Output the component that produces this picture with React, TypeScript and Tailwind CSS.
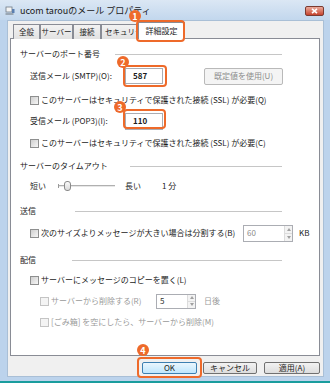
import React from 'react';

function Check({ disabled }: { disabled?: boolean }) {
  return (
    <span
      className={
        disabled
          ? 'inline-block w-[9px] h-[9px] shrink-0 border border-[#c4c4c4] bg-[#f4f4f4]'
          : 'inline-block w-[9px] h-[9px] shrink-0 border border-[#8e8f8f] bg-gradient-to-br from-[#cfcfcf] to-[#f7f7f7]'
      }
    />
  );
}

function Header({ title, line }: { title: string; line: string }) {
  return (
    <div className="flex h-[20px] items-center pl-[9px] pr-[37px]">
      <span>{title}</span>
      <div className={`ml-auto border-t border-[#c6c6c6] ${line}`} />
    </div>
  );
}

function Spin({ value, box, dim }: { value: string; box: string; dim?: boolean }) {
  return (
    <div className={`flex border border-[#abadb3] bg-white ${box}`}>
      <span className={`flex-1 pl-[3px] flex items-center ${dim ? 'text-[#8a8a8a]' : 'text-[#333]'}`}>{value}</span>
      <div className="flex w-[8px] flex-col border-l border-[#dcdcdc]">
        <div className="flex flex-1 items-center justify-center border-b border-[#dcdcdc] bg-[#f3f3f3]">
          <svg width="4" height="3" viewBox="0 0 4 3"><path d="M0 3 L2 0 L4 3 Z" fill="#a0a0a0" /></svg>
        </div>
        <div className="flex flex-1 items-center justify-center bg-[#f3f3f3]">
          <svg width="4" height="3" viewBox="0 0 4 3"><path d="M0 0 L2 3 L4 0 Z" fill="#a0a0a0" /></svg>
        </div>
      </div>
    </div>
  );
}

function Tab({ label, w }: { label: string; w: string }) {
  return (
    <div className={`flex h-[15px] items-center justify-center overflow-hidden whitespace-nowrap border border-b-0 border-[#898c95] bg-gradient-to-b from-[#f2f2f2] to-[#e2e2e2] text-[7.5px] ${w}`}>
      {label}
    </div>
  );
}

export default function App() {
  return (
    <div className="relative flex h-[383px] w-[330px] flex-col overflow-hidden border-b-2 border-[#1a9d9e] bg-[#bcd3ec] text-[8px] leading-none text-[#1b1b1b] font-['Noto_Sans_CJK_JP','Noto_Sans',sans-serif]">
      {/* title bar */}
      <div className="flex h-[20px] shrink-0 items-center bg-gradient-to-b from-[#dbe7f4] to-[#c2d7ed] pl-[5px] pr-[6px]">
        <svg width="10" height="10" viewBox="0 0 10 10" className="mt-[2px]">
          <rect x="1" y="1" width="6" height="5" fill="#f4f4f4" stroke="#6f7a86" strokeWidth="0.8" />
          <rect x="0.5" y="7" width="8" height="2" fill="#9aa7b4" />
          <rect x="7" y="3" width="2.5" height="4" fill="#5b7fb0" />
        </svg>
        <span className="ml-[5px] mt-[1px] text-[9px] text-[#1a1a1a]">ucom tarouのメール プロパティ</span>
        <div className="ml-auto mt-[1px] flex h-[10px] w-[19px] items-center justify-center rounded-[2px] border border-[#7a3a30] bg-gradient-to-b from-[#e9a99b] to-[#c5412c]">
          <svg width="7" height="6" viewBox="0 0 7 6">
            <path d="M1 0.8 L6 5.2 M6 0.8 L1 5.2" stroke="#ffffff" strokeWidth="1.6" />
          </svg>
        </div>
      </div>

      {/* dialog body */}
      <div className="ml-[7px] flex h-[357px] w-[317px] flex-col border border-[#a9bfd6] bg-[#f0f0f0] pl-[2px]">
        {/* tabs */}
        <div className="relative z-10 mt-[1px] flex h-[17px] items-end pl-[3px] -mb-[1px]">
          <Tab label="全般" w="w-[27px]" />
          <Tab label="サーバー" w="w-[33px]" />
          <Tab label="接続" w="w-[28px]" />
          <div className="flex h-[15px] w-[38px] items-center overflow-hidden whitespace-nowrap border border-b-0 border-[#898c95] bg-gradient-to-b from-[#f2f2f2] to-[#e2e2e2] pl-[3px] text-[7.5px]">
            セキュリティ
          </div>
          <div className="-ml-[1px] flex h-[17px] w-[47px] items-center justify-center border border-b-0 border-[#898c95] bg-white">
            詳細設定
          </div>
        </div>

        {/* panel */}
        <div className="flex h-[318px] w-[310px] flex-col border border-[#898c95] bg-white">
          <div className="mt-[5px]">
            <Header title="サーバーのポート番号" line="w-[167px]" />
          </div>
          <div className="mt-[2px] flex h-[20px] items-center pl-[19px]">
            <span className="w-[95px]">送信メール (SMTP)(O):</span>
            <div className="flex h-[16px] w-[38px] items-center border border-[#abadb3] bg-white pl-[7px] font-semibold">587</div>
            <div className="ml-[41px] flex h-[17px] w-[79px] items-center justify-center rounded-[2px] border border-[#b9b9b9] bg-[#f4f4f4] text-[#8c8c8c]">
              既定値を使用(U)
            </div>
          </div>
          <div className="mt-[4px] flex h-[20px] items-center pl-[19px]">
            <Check />
            <span className="ml-[2px]">このサーバーはセキュリティで保護された接続 (SSL) が必要(Q)</span>
          </div>
          <div className="mt-[1px] flex h-[20px] items-center pl-[19px]">
            <span className="w-[95px]">受信メール (POP3)(I):</span>
            <div className="flex h-[17px] w-[38px] items-center border border-[#abadb3] bg-white pl-[7px] font-semibold">110</div>
          </div>
          <div className="mt-[2px] flex h-[20px] items-center pl-[19px]">
            <Check />
            <span className="ml-[2px]">このサーバーはセキュリティで保護された接続 (SSL) が必要(C)</span>
          </div>

          <div className="mt-[3px]">
            <Header title="サーバーのタイムアウト" line="w-[152px]" />
          </div>
          <div className="flex h-[20px] items-center pl-[19px]">
            <span className="w-[28px]">短い</span>
            <div className="relative h-[12px] w-[57px]">
              <div className="absolute left-0 right-0 top-[5px] h-[2px] border-t border-[#b0b0b0] bg-[#e7e7e7]" />
              <div className="absolute left-0 top-[4px] h-[4px] w-[1px] bg-[#9a9a9a]" />
              <div className="absolute left-[6px] top-[1px] h-[10px] w-[7px] rounded-[3px] border border-[#8a8a8a] bg-gradient-to-b from-[#fbfbfb] to-[#dadada]" />
            </div>
            <span className="ml-[10px] w-[37px]">長い</span>
            <span>1 分</span>
          </div>

          <div className="mt-[5px]">
            <Header title="送信" line="w-[207px]" />
          </div>
          <div className="mt-[2px] flex h-[20px] items-center pl-[19px]">
            <Check />
            <span className="ml-[2px] w-[202px]">次のサイズよりメッセージが大きい場合は分割する(B)</span>
            <Spin value="60" box="h-[17px] w-[50px]" dim />
            <span className="ml-[6px]">KB</span>
          </div>

          <div className="mt-[7px]">
            <Header title="配信" line="w-[210px]" />
          </div>
          <div className="flex h-[20px] items-center pl-[19px]">
            <Check />
            <span className="ml-[2px]">サーバーにメッセージのコピーを置く(L)</span>
          </div>
          <div className="mt-[1px] flex h-[20px] items-center pl-[29px] text-[#9a9a9a]">
            <Check disabled />
            <span className="ml-[2px] w-[105px]">サーバーから削除する(R)</span>
            <Spin value="5" box="h-[15px] w-[40px]" />
            <span className="ml-[8px]">日後</span>
          </div>
          <div className="mt-[1px] flex h-[20px] items-center pl-[29px] text-[#9a9a9a]">
            <Check disabled />
            <span className="ml-[2px]">[ごみ箱] を空にしたら、サーバーから削除(M)</span>
          </div>
        </div>

        {/* buttons */}
        <div className="mt-[6px] flex h-[12px] justify-end gap-[6px] pr-[3px]">
          <div className="flex w-[55px] items-center justify-center rounded-[2px] border border-[#3c7fb1] bg-gradient-to-b from-[#eaf6fd] to-[#bee6fd]">OK</div>
          <div className="flex w-[54px] items-center justify-center rounded-[2px] border border-[#707070] bg-gradient-to-b from-[#f2f2f2] to-[#dddddd]">キャンセル</div>
          <div className="ml-[1px] flex w-[56px] items-center justify-center rounded-[2px] border border-[#707070] bg-gradient-to-b from-[#f2f2f2] to-[#dddddd]">適用(A)</div>
        </div>
      </div>

      {/* callout highlights */}
      <div className="pointer-events-none absolute left-[136px] top-[20px] z-20 h-[22px] w-[49px] rounded-[4px] border-[2.5px] border-[#ee6a2a]" />
      <div className="pointer-events-none absolute left-[123px] top-[65px] z-20 h-[22px] w-[44px] rounded-[4px] border-[2.5px] border-[#ee6a2a]" />
      <div className="pointer-events-none absolute left-[123px] top-[109px] z-20 h-[20px] w-[43px] rounded-[4px] border-[2.5px] border-[#ee6a2a]" />
      <div className="pointer-events-none absolute left-[137px] top-[357px] z-20 h-[21px] w-[65px] rounded-[4px] border-[2.5px] border-[#ee6a2a]" />

      <div className="absolute left-[129px] top-[10px] z-30 flex h-[12px] w-[12px] items-center justify-center rounded-full bg-[#ee6a2a] text-[9px] font-bold text-white">1</div>
      <div className="absolute left-[117px] top-[56px] z-30 flex h-[12px] w-[12px] items-center justify-center rounded-full bg-[#ee6a2a] text-[9px] font-bold text-white">2</div>
      <div className="absolute left-[114px] top-[101px] z-30 flex h-[12px] w-[12px] items-center justify-center rounded-full bg-[#ee6a2a] text-[9px] font-bold text-white">3</div>
      <div className="absolute left-[137px] top-[344px] z-30 flex h-[12px] w-[12px] items-center justify-center rounded-full bg-[#ee6a2a] text-[9px] font-bold text-white">4</div>
    </div>
  );
}
